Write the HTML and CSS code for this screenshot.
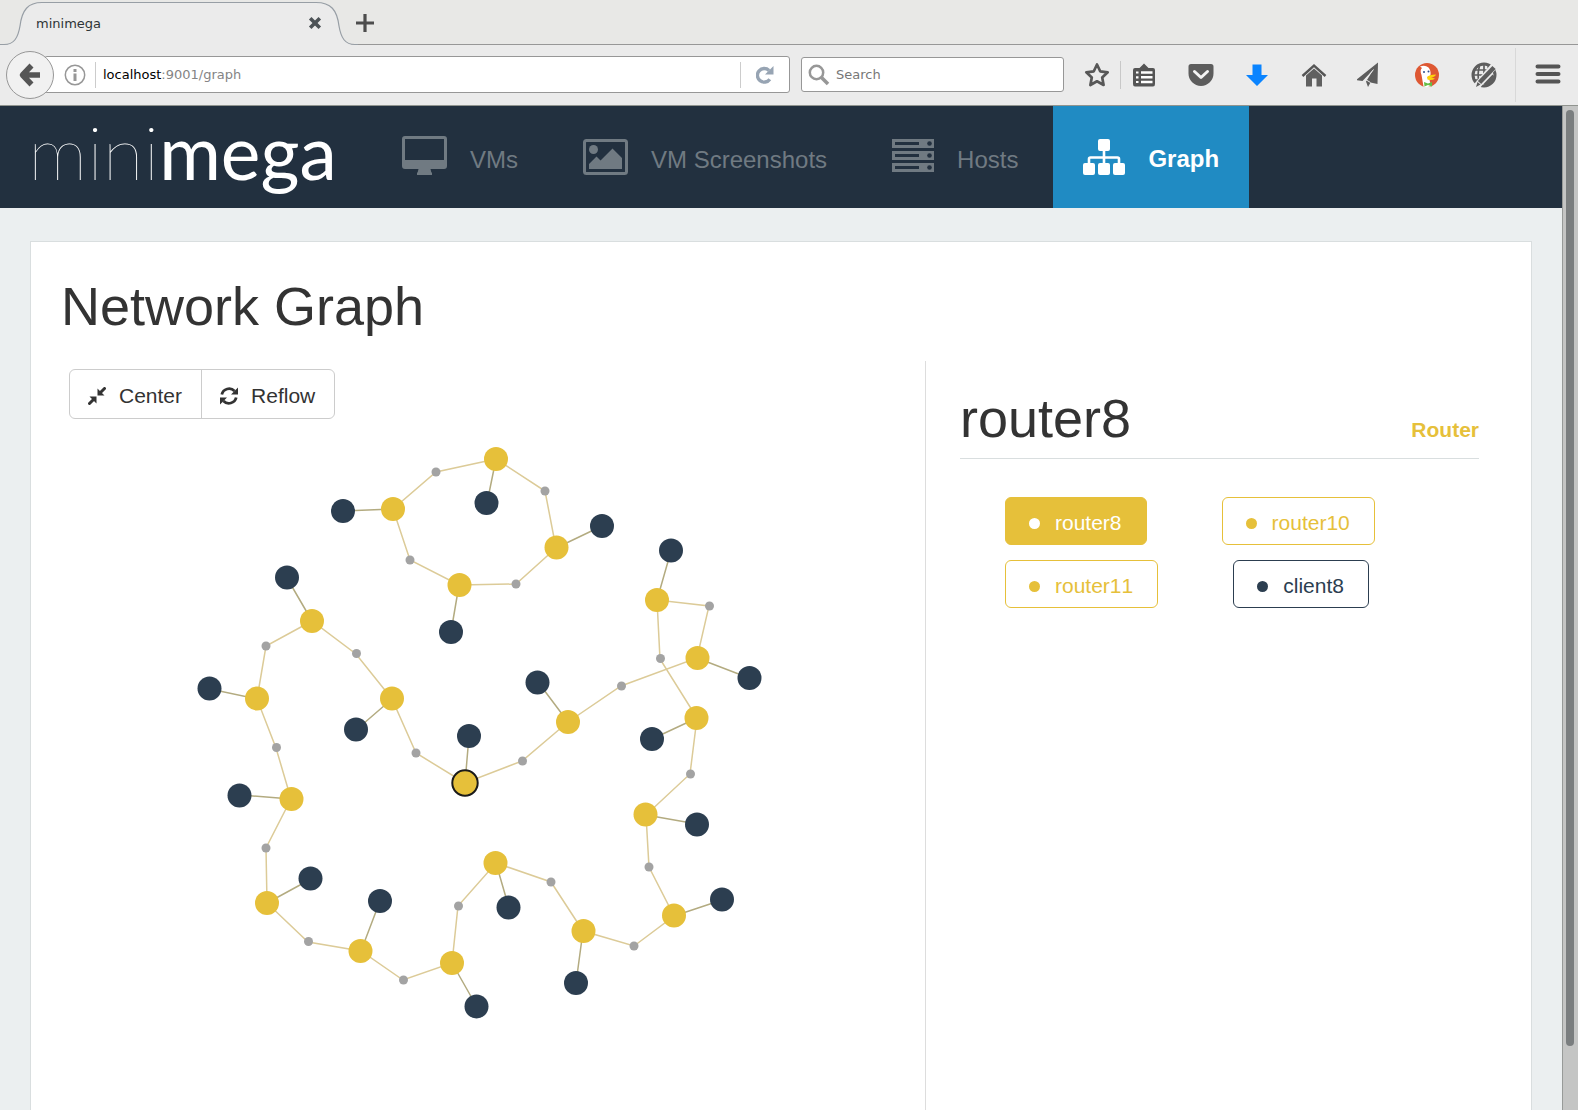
FILE: index.html
```html
<!DOCTYPE html>
<html lang="en">
<head>
<meta charset="utf-8">
<title>minimega</title>
<link rel="stylesheet" href="styles.css">
</head>
<body>
<div class="browser">
  <div class="tabstrip">
    <div class="tab">
      <svg class="tab-shape" width="358" height="46" viewBox="0 0 358 46" aria-hidden="true">
        <path d="M0 46V44.500H4C14 44.500 18 38 20 26C22 10 28 2.500 42 2.500H316C331 2.500 337 10 339 26C341 38 345 44.500 355 44.500H358V46Z" fill="#ebebeb"/>
        <path d="M0 44.500H4C14 44.500 18 38 20 26C22 10 28 2.500 42 2.500H316C331 2.500 337 10 339 26C341 38 345 44.500 355 44.500H358" fill="none" stroke="#979ea5" stroke-width="1.200"/>
      </svg>
      <span class="tab-title">minimega</span>
      <button class="tab-close" aria-label="Close tab"><svg width="14" height="14" viewBox="0 0 14 14"><path d="M2.200 2.200L11.800 11.800M11.800 2.200L2.200 11.800" stroke="#4d5357" stroke-width="3.600"/></svg></button>
    </div>
    <button class="tab-new" aria-label="New tab"><svg width="18" height="18" viewBox="0 0 18 18"><path d="M9 0V18M0 9H18" stroke="#4d4d4d" stroke-width="3.200"/></svg></button>
  </div>
  <div class="toolbar">
    <button class="back" aria-label="Back"><svg width="24" height="26" viewBox="0 0 24 26"><path d="M13.500 3.500L4.500 13L13.500 22.500M5 13H22" fill="none" stroke="#555" stroke-width="5.500" stroke-linejoin="round"/></svg></button>
    <div class="urlbar">
      <svg width="22" height="22" viewBox="0 0 22 22"><circle cx="11" cy="11" r="9.700" fill="none" stroke="#979797" stroke-width="1.500"/><path d="M11 5V8M11 9.500V17" stroke="#979797" stroke-width="3"/></svg>
      <span class="url" tabindex="0"><b>localhost</b>:9001/graph</span>
      <button class="reload" aria-label="Reload"><svg width="18" height="18" viewBox="0 0 18 18"><path d="M13.800 13.200A6.800 6.800 0 1 1 13 4.500" fill="none" stroke="#97a4b3" stroke-width="3.400"/><path d="M17.500 0V8.500H9Z" fill="#97a4b3"/></svg></button>
    </div>
    <label class="search">
      <svg width="22" height="22" viewBox="0 0 22 22"><circle cx="8.500" cy="8.500" r="6.700" fill="none" stroke="#979797" stroke-width="2.500"/><path d="M13 13L20 20" stroke="#979797" stroke-width="3.600"/></svg>
      <input type="text" placeholder="Search" aria-label="Search">
    </label>
    <button class="tool star" aria-label="Bookmark"><svg width="26" height="26" viewBox="0 0 26 26"><path d="M13 2.500L16.200 9.300L23.700 10.300L18.200 15.500L19.600 23L13 19.300L6.400 23L7.800 15.500L2.300 10.300L9.800 9.300Z" fill="none" stroke="#575757" stroke-width="2.700" stroke-linejoin="round"/></svg></button>
    <span class="divider"></span>
    <div class="tools">
      <button class="tool" aria-label="Bookmarks list"><svg width="24" height="24" viewBox="0 0 24 24"><path d="M1 7Q1 5 3 5H7.500L12 .5L16.500 5H21Q23 5 23 7V21Q23 23.500 21 23.500H3Q1 23.500 1 21Z" fill="#555"/><path d="M9 9.500H20.500M9 14.300H20.500M9 19H20.500" stroke="#fff" stroke-width="2.400"/><path d="M4 9.500H6.500M4 14.300H6.500M4 19H6.500" stroke="#fff" stroke-width="2.200"/></svg></button>
      <button class="tool" aria-label="Pocket"><svg width="26" height="24" viewBox="0 0 26 24"><path d="M.5 3.500Q.5 1 3 1H23Q25.500 1 25.500 3.500V10.500A12.500 12.500 0 0 1 .5 10.500Z" fill="#5d5d5d"/><path d="M6.500 8.500L13 14.500L19.500 8.500" fill="none" stroke="#f4f4f4" stroke-width="3" stroke-linecap="round" stroke-linejoin="round"/></svg></button>
      <button class="tool" aria-label="Downloads"><svg width="24" height="24" viewBox="0 0 24 24"><path d="M7.500 1.500H16.500V12H23L12 23L1 12H7.500Z" fill="#0a84ff"/></svg></button>
      <button class="tool" aria-label="Home"><svg width="26" height="24" viewBox="0 0 26 24"><path d="M1.500 13L13 2.500L24.500 13" fill="none" stroke="#555" stroke-width="2.400"/><path d="M5 12.500L13 5.500L21 12.500V23.500H15.500V15.500H11V23.500H5Z" fill="#606060"/></svg></button>
      <button class="tool" aria-label="Send"><svg width="28" height="26" viewBox="2 0 28 26"><path d="M23 .5L1 18L7.500 19L18.500 7.500L11 19.500L13 25L15.500 20.500L22.500 22Z" fill="#5d5d5d"/><path d="M18.500 7.500L10.500 17.500L15.500 20.500" fill="none" stroke="#ebebeb" stroke-width="1"/></svg></button>
      <button class="tool" aria-label="DuckDuckGo"><svg width="26" height="26" viewBox="0 0 26 26"><circle cx="13" cy="13" r="12" fill="#de5833"/><path d="M6 4.500Q11 2.500 14.500 5.500Q17 8 16.500 13L15 16L17 24Q13 26 9.500 24.500L7.500 13Q5.500 8 8 6Z" fill="#fff"/><circle cx="10" cy="10" r="1" fill="#2d4f8e"/><circle cx="14.500" cy="9.500" r="1" fill="#2d4f8e"/><path d="M13 15Q15 12.500 22 12.500Q21 15 17 15.500L21 16.500Q18 19 13.500 17.500Z" fill="#fdd20a"/><path d="M10 20L14 21.500L18 20V24.500L14 23L10.500 24.500Z" fill="#65bc46"/></svg></button>
      <button class="tool" aria-label="Globe"><svg width="26" height="26" viewBox="0 0 26 26"><circle cx="13" cy="13" r="11" fill="none" stroke="#5d5d5d" stroke-width="3"/><path d="M13 2V14M8.500 4Q6 12 8 20M17 4L18 9M2 13H15M4 8H20M4 18H10" fill="none" stroke="#5d5d5d" stroke-width="1.700"/><path d="M6 24L23 4" stroke="#ebebeb" stroke-width="7"/><path d="M8.500 20.500L23 5.500" stroke="#5d5d5d" stroke-width="4.500"/><path d="M5 25L6.500 20L9.500 22.500Z" fill="#5d5d5d"/><path d="M14 23.500L23 14" stroke="#5d5d5d" stroke-width="4"/></svg></button>
    </div>
    <span class="divider tall"></span>
    <button class="tool" aria-label="Menu"><svg width="26" height="24" viewBox="0 0 26 24"><path d="M2.500 3.500H23.500M2.500 11H23.500M2.500 18.500H23.500" stroke="#555" stroke-width="4" stroke-linecap="round"/></svg></button>
  </div>

  <div class="viewport">
    <div class="page">
      <header class="navbar">
        <a class="logo" href="#"><span class="logo-thin">mini</span><span class="logo-bold">mega</span></a>
        <nav class="nav">
          <a class="nav-item" href="#">
            <svg width="45" height="42" viewBox="0 0 45 42" fill="currentColor"><path fill-rule="evenodd" d="M3 0H42Q45 0 45 3V30Q45 33 42 33H28.500Q29 36 30 37V39H15V37Q16 36 16.500 33H3Q0 33 0 30V3Q0 0 3 0ZM3 3V24H42V3Z"/></svg>
            <span>VMs</span>
          </a>
          <a class="nav-item" href="#">
            <svg width="45" height="42" viewBox="0 0 45 42" fill="currentColor"><rect x="1.500" y="4.500" width="42" height="33" rx="2" fill="none" stroke="currentColor" stroke-width="3"/><circle cx="10.500" cy="13.500" r="4.500"/><path d="M6 33V28L13.500 20.500L17.500 24.500L29.500 12.500L39 22V33Z"/></svg>
            <span>VM Screenshots</span>
          </a>
          <a class="nav-item" href="#">
            <svg width="42" height="42" viewBox="0 0 42 42" fill="currentColor"><path fill-rule="evenodd" d="M0 3H42V12H0ZM3 6V9H27V6ZM0 15H42V24H0ZM3 18V21H27V18ZM0 27H42V36H0ZM3 30V33H27V30Z"/><g class="hole"><circle cx="37.500" cy="7.500" r="2.300"/><circle cx="37.500" cy="19.500" r="2.300"/><circle cx="37.500" cy="31.500" r="2.300"/></g></svg>
            <span>Hosts</span>
          </a>
          <a class="nav-item active" href="#" aria-current="page">
            <svg width="42" height="42" viewBox="0 0 42 42" fill="currentColor"><rect x="15" y="3" width="12" height="12" rx="2"/><rect y="27" width="12" height="12" rx="2"/><rect x="15" y="27" width="12" height="12" rx="2"/><rect x="30" y="27" width="12" height="12" rx="2"/><path d="M21 14V28M6 28V23Q6 21.500 7.500 21.500H34.500Q36 21.500 36 23V28" fill="none" stroke="currentColor" stroke-width="2.600"/></svg>
            <span>Graph</span>
          </a>
        </nav>
      </header>

      <main class="panel">
        <h1>Network Graph</h1>
        <div class="columns">
          <section class="graph">
            <div class="btn-group">
              <button class="btn"><svg width="18" height="18" viewBox="0 0 18 18"><path d="M16.500 1.500L12 6M1.500 16.500L6 12" stroke="#333" stroke-width="3" stroke-linecap="round"/><path d="M9.500 1.500V8.500H16.500ZM8.500 16.500V9.500H1.500Z" fill="#333"/></svg>Center</button>
              <button class="btn"><svg width="18" height="18" viewBox="0 0 18 18"><path d="M1.800 7.500A7.500 7.500 0 0 1 14.500 4M16.200 10.500A7.500 7.500 0 0 1 3.500 14" fill="none" stroke="#333" stroke-width="2.800"/><path d="M18 .5V7.500H11ZM0 17.500V10.500H7Z" fill="#333"/></svg>Reflow</button>
            </div>
            <svg class="network" viewBox="61 419 864 691" role="img" aria-label="Network topology">
              <g class="link">
                <path d="M496 459L436 472L393 509L410 560L459 585L516 584L556 548L545 491Z"/>
                <path d="M465 783L416 753L392 699L356 654L312 621L266 646L257 699L276 748L291 799L266 848L267 903L308 942L361 951L403 980L452 963L458 906L496 863L551 882L583 931L634 946L674 916L649 867L646 815L690 774L697 718L660 659L657 600L709 606L697 658L621 686L568 722L522 761Z"/>
              </g>
              <g class="link host-link">
                <path d="M393 509L343 511M496 459L487 503M556 548L602 526M459 585L451 632M657 600L671 551M697 658L749 678M568 722L538 682M697 718L652 739M465 783L469 736M392 699L356 730M312 621L287 578M257 699L210 689M291 799L240 795M267 903L311 879M361 951L380 901M452 963L477 1007M496 863L509 908M583 931L576 983M674 916L722 900M646 815L697 824"/>
              </g>
              <g class="switch">
                <circle cx="436" cy="472" r="4.500"/><circle cx="545" cy="491" r="4.500"/><circle cx="410" cy="560" r="4.500"/><circle cx="516" cy="584" r="4.500"/><circle cx="709.500" cy="606" r="4.500"/><circle cx="660.500" cy="658.500" r="4.500"/><circle cx="621.500" cy="686" r="4.500"/><circle cx="690.500" cy="774" r="4.500"/><circle cx="522.500" cy="761" r="4.500"/><circle cx="416" cy="753" r="4.500"/><circle cx="356.500" cy="653.500" r="4.500"/><circle cx="266" cy="646" r="4.500"/><circle cx="276.500" cy="747.500" r="4.500"/><circle cx="266" cy="848" r="4.500"/><circle cx="308.500" cy="941.500" r="4.500"/><circle cx="403.500" cy="980" r="4.500"/><circle cx="458.500" cy="906" r="4.500"/><circle cx="551" cy="882" r="4.500"/><circle cx="634" cy="946" r="4.500"/><circle cx="649" cy="867" r="4.500"/>
              </g>
              <g class="client">
                <circle cx="343" cy="511" r="12"/><circle cx="486.500" cy="503" r="12"/><circle cx="602" cy="526" r="12"/><circle cx="451" cy="632" r="12"/><circle cx="671" cy="550.500" r="12"/><circle cx="749.500" cy="678" r="12"/><circle cx="537.500" cy="682.500" r="12"/><circle cx="652" cy="739" r="12"/><circle cx="469" cy="736" r="12"/><circle cx="356" cy="729.500" r="12"/><circle cx="287" cy="577.500" r="12"/><circle cx="209.500" cy="688.500" r="12"/><circle cx="239.500" cy="795.500" r="12"/><circle cx="310.500" cy="878.500" r="12"/><circle cx="380" cy="901" r="12"/><circle cx="476.500" cy="1006.500" r="12"/><circle cx="508.500" cy="907.500" r="12"/><circle cx="576" cy="983" r="12"/><circle cx="722" cy="899.500" r="12"/><circle cx="697" cy="824.500" r="12"/>
              </g>
              <g class="router">
                <circle cx="496" cy="459" r="12"/><circle cx="393" cy="509" r="12"/><circle cx="556.500" cy="547.500" r="12"/><circle cx="459.500" cy="585" r="12"/><circle cx="657" cy="600" r="12"/><circle cx="697.500" cy="658" r="12"/><circle cx="568" cy="722" r="12"/><circle cx="696.500" cy="718" r="12"/><circle cx="392" cy="698.500" r="12"/><circle cx="312" cy="621" r="12"/><circle cx="257" cy="698.500" r="12"/><circle cx="291.500" cy="799" r="12"/><circle cx="267" cy="903" r="12"/><circle cx="360.500" cy="951" r="12"/><circle cx="452" cy="963" r="12"/><circle cx="495.500" cy="863" r="12"/><circle cx="583.500" cy="931" r="12"/><circle cx="674" cy="915.500" r="12"/><circle cx="645.500" cy="814.500" r="12"/>
                <circle class="selected" cx="465" cy="783" r="12.700"/>
              </g>
            </svg>
          </section>
          <aside class="details">
            <div class="details-head"><h2>router8</h2><strong>Router</strong></div>
            <div class="node-list">
              <button class="node node-current"><i></i>router8</button>
              <button class="node"><i></i>router10</button>
              <button class="node"><i></i>router11</button>
              <button class="node node-client"><i></i>client8</button>
            </div>
          </aside>
        </div>
      </main>
    </div>
    <div class="scrollbar"><div class="thumb"></div></div>
  </div>
</div>
</body>
</html>
```
FILE: styles.css
```css
* { box-sizing: border-box; }
body { margin: 0; font-family: "Liberation Sans", Arial, sans-serif; color: #333; }
button { margin: 0; padding: 0; border: 0; background: none; font: inherit; color: inherit; }
svg { display: block; flex: none; }
a { text-decoration: none; }

.browser { display: flex; flex-direction: column; height: 100vh; overflow: hidden; background: #ebebeb; }

/* tab strip */
.tabstrip { display: flex; align-items: stretch; height: 45px; background: #e8e8e6; border-bottom: 1px solid #979797; font: 13px "DejaVu Sans", sans-serif; }
.tab { position: relative; display: flex; align-items: center; justify-content: space-between; width: 356px; padding: 2px 34px 0 36px; }
.tab-shape { position: absolute; left: 0; top: 0; }
.tab-title, .tab-close { position: relative; }
.tab-title { color: #2e3436; }
.tab-new { padding-top: 2px; }

/* toolbar */
.toolbar { display: flex; align-items: center; height: 61px; padding: 0 18px 1px 6px; border-bottom: 1px solid #90948f; font: 13px "DejaVu Sans", sans-serif; }
.back { position: relative; display: flex; align-items: center; justify-content: center; width: 48px; height: 48px; border: 1px solid #979797; border-radius: 50%; background: #f1f1f1; }
.urlbar { display: flex; align-items: center; flex: 1; height: 37px; margin-left: -10px; padding-left: 19px; border: 1px solid #979797; border-radius: 3px; background: #fff; }
.url { flex: 1; margin-left: 9px; padding-left: 7px; border-left: 1px solid #ccc; line-height: 26px; color: #848484; }
.url b { font-weight: normal; color: #000; }
.reload { display: flex; align-items: center; justify-content: center; width: 49px; height: 26px; border-left: 1px solid #ccc; }
.search { display: flex; align-items: center; gap: 6px; width: 263px; height: 35px; margin-left: 11px; padding-left: 6px; border: 1px solid #979797; border-radius: 3px; background: #fff; }
.search input { flex: 1; min-width: 0; padding: 0; border: 0; outline: 0; background: none; font: inherit; }
.search input::placeholder { color: #777; }
.tool { display: flex; align-items: center; justify-content: center; width: 24px; height: 26px; }
.star { margin-left: 21px; }
.tools { display: flex; justify-content: space-between; width: 364px; }
.divider { width: 1px; height: 28px; margin: 0 11px; background: #c8c8c8; }
.divider.tall { height: 54px; margin: 0 20px 0 19px; background: #d8d8d8; }

/* page */
.viewport { display: flex; flex: 1; min-height: 0; }
.page { flex: 1; min-width: 0; overflow: hidden; background: #ebeff0; }
.scrollbar { width: 16px; padding: 4px 3px; border-left: 1px solid #979a98; background: #c4c5c4; }
.thumb { width: 8px; height: 94%; border-radius: 4px; background: #7a7e7f; }

.navbar { display: flex; height: 102px; background: #22303f; }
.logo { display: flex; align-items: center; width: 372px; padding: 0 0 12px 28px; color: #fff; font-family: Lato, sans-serif; font-size: 75px; line-height: 90px; }
.logo-thin { font-weight: 100; }
.logo-bold { font-weight: 400; }
.nav { display: flex; gap: 5px; }
.nav-item { display: flex; align-items: center; gap: 23px; padding: 0 30px; color: #707a82; font-size: 24px; line-height: 28px; }
.nav-item span { padding-top: 5px; }
.nav-item.active { background: #208bc3; color: #fff; font-weight: bold; }
.nav-item.active span { padding-top: 3px; }
.hole { fill: #22303f; }

.panel { margin: 33px 30px 0; padding: 34px 30px 0; border: 1px solid #d9dedf; background: #fff; }
h1, h2 { margin: 0; font-size: 54px; font-weight: normal; line-height: 60px; }
h1 { margin-bottom: 25px; }
.columns { display: grid; grid-template-columns: 3fr 2fr; }
.graph { padding-top: 8px; }
.btn-group { display: inline-flex; margin-left: 8px; border: 1px solid #ccc; border-radius: 6px; vertical-align: top; }
.btn { display: flex; align-items: center; gap: 13px; height: 48px; padding: 3px 19px 0 18px; font-size: 21px; }
.btn + .btn { border-left: 1px solid #ccc; }
.network { width: 100%; }
.link { fill: none; stroke: #dccb98; stroke-width: 1.500; }
.host-link { stroke: #b3ab80; }
.switch { fill: #a3a3a3; }
.client { fill: #2c3e50; }
.router { fill: #e6c03a; }
.selected { stroke: #1a1a1a; stroke-width: 2; }

.details { padding: 27px 22px 0 34px; border-left: 1px solid #ddd; }
.details-head { display: flex; align-items: baseline; justify-content: space-between; padding-bottom: 10px; border-bottom: 1px solid #d9dedf; }
.details-head strong { font-size: 21px; color: #e6c03a; }
.node-list { display: flex; flex-wrap: wrap; gap: 15px 75px; padding: 38px 0 0 45px; font-kerning: none; }
.node { display: flex; align-items: center; height: 48px; padding: 3px 24px 0 23px; gap: 15px; border: 1px solid #e6c03a; border-radius: 6px; color: #e6c03a; font-size: 21px; }
.node i { width: 11px; height: 11px; margin-top: 2px; border-radius: 50%; background: currentColor; }
.node-current { background: #e6c03a; color: #fff; }
.node-client { border-color: #2c3e50; color: #2c3e50; }
```
